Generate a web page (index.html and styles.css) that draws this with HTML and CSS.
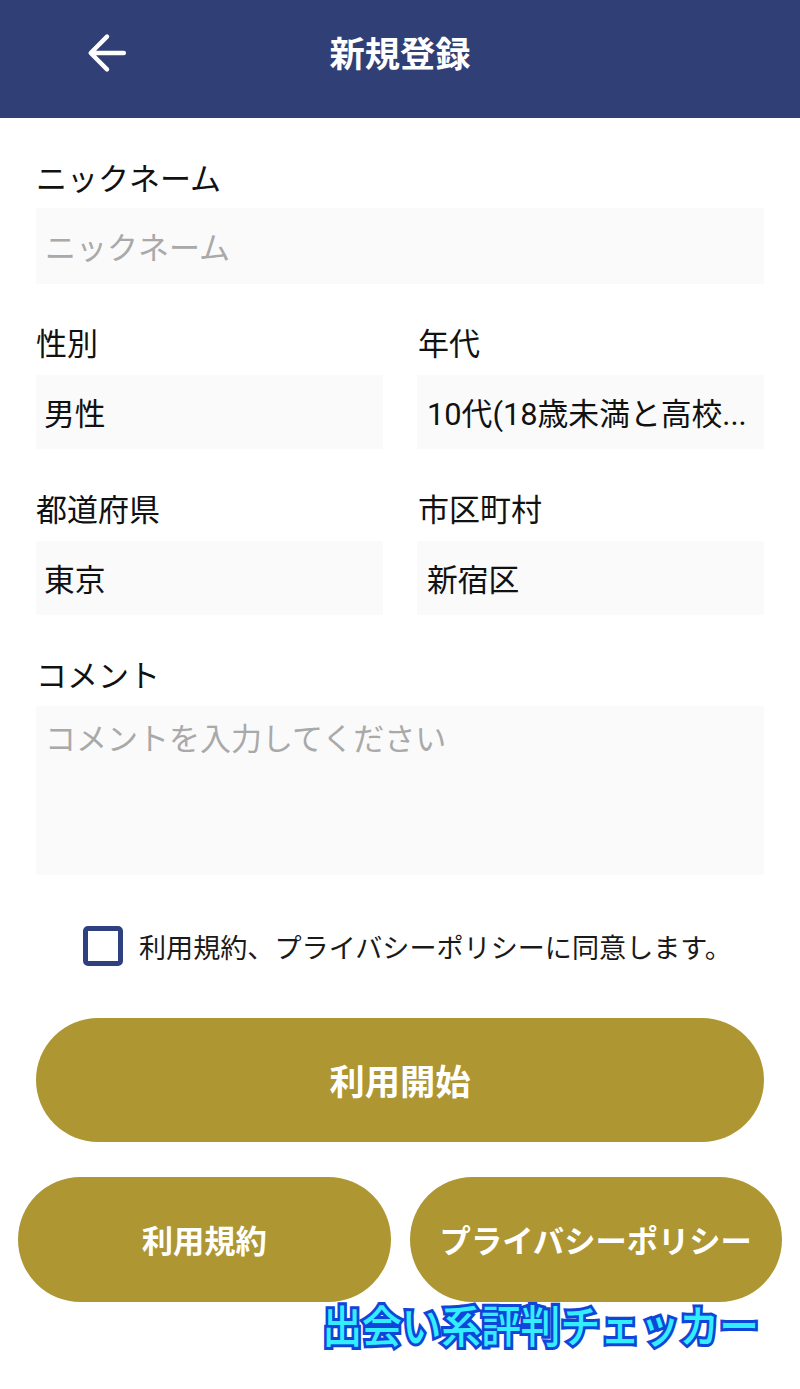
FILE: index.html
```html
<!DOCTYPE html>
<html lang="ja">
<head>
<meta charset="utf-8">
<title>新規登録</title>
<link rel="stylesheet" href="styles.css">
</head>
<body>
<header class="header">
  <svg class="back" viewBox="0 0 38 38" aria-hidden="true"><path d="M35 19H4M19 3.500 3.500 19 19 34.500" fill="none" stroke="#fff" stroke-width="4.200" stroke-linecap="round" stroke-linejoin="round"/></svg>
  <h1 class="title">新規登録</h1>
</header>
<main class="form">
  <section class="group">
    <div class="label">ニックネーム</div>
    <div class="field placeholder">ニックネーム</div>
  </section>
  <div class="row">
    <section class="group">
      <div class="label">性別</div>
      <div class="field select">男性</div>
    </section>
    <section class="group">
      <div class="label">年代</div>
      <div class="field select indent">10代(18歳未満と高校...</div>
    </section>
  </div>
  <div class="row">
    <section class="group">
      <div class="label">都道府県</div>
      <div class="field select">東京</div>
    </section>
    <section class="group">
      <div class="label">市区町村</div>
      <div class="field select indent">新宿区</div>
    </section>
  </div>
  <section class="group">
    <div class="label comment-label">コメント</div>
    <div class="field textarea placeholder">コメントを入力してください</div>
  </section>
  <div class="agree">
    <span class="checkbox"></span>
    <span class="agree-text">利用規約、プライバシーポリシーに同意します。</span>
  </div>
  <button class="btn primary">利用開始</button>
</main>
<nav class="links">
  <button class="btn link">利用規約</button>
  <button class="btn link">プライバシーポリシー</button>
</nav>
<div class="mark-row"><span class="mark">出会い系評判チェッカー</span></div>
</body>
</html>
```
FILE: styles.css
```css
* { box-sizing: border-box; }
html, body { margin: 0; padding: 0; background: #fff; }
body {
  width: 800px;
  height: 1389px;
  overflow: hidden;
  font-family: Roboto, "Noto Sans CJK JP", "Noto Sans", sans-serif;
  color: #111;
}
.header {
  position: relative;
  height: 118px;
  background: #303f75;
  display: flex;
  align-items: center;
  justify-content: center;
}
.back { position: absolute; left: 87px; top: 33px; width: 40px; height: 40px; }
.title { margin: 0 0 8px; font-size: 35.300px; line-height: 50px; font-weight: 700; color: #fff; }
.form { padding: 0 36px; }
.group { flex: 1 1 0; min-width: 0; padding-top: 36px; }
.label { font-size: 31px; line-height: 52px; height: 54px; white-space: nowrap; }
.row .label { line-height: 50px; height: 55px; }
.row + .row .label { line-height: 52px; height: 56px; }
.row .group + .group .label { padding-left: 1px; }
.comment-label { line-height: 52px; height: 55px; }
.field {
  height: 76px;
  background: #fafafa;
  font-size: 31px;
  line-height: 82px;
  padding-left: 9px;
  white-space: nowrap;
  overflow: hidden;
}
.select { height: 74px; line-height: 80px; font-size: 30.800px; padding-left: 8px; }
.select.indent { padding-left: 10px; }
.placeholder { color: #a9a9a9; }
.row { display: flex; gap: 34px; }
.textarea { height: 169px; line-height: 68px; }
.agree {
  display: flex;
  align-items: center;
  padding-left: 47px;
  margin-top: 51px;
  height: 40px;
}
.checkbox {
  width: 40px;
  height: 40px;
  border: 5px solid #2e4080;
  border-radius: 5px;
  margin-right: 16px;
  flex: none;
}
.agree-text { font-size: 27.100px; white-space: nowrap; color: #1a1a1a; }
.btn {
  display: block;
  border: 0;
  padding: 0;
  background: #ae9632;
  color: #fff;
  font-family: inherit;
  font-weight: 700;
  white-space: nowrap;
}
.primary {
  width: 100%;
  height: 124px;
  border-radius: 62px;
  margin-top: 52px;
  padding-bottom: 2px;
  font-size: 35.300px;
}
.links {
  display: flex;
  gap: 19px;
  padding: 0 18px;
  margin-top: 35px;
}
.link {
  flex: 1 1 0;
  height: 125px;
  border-radius: 62.500px;
  font-size: 31.300px;
}
.mark-row { display: flex; justify-content: flex-end; padding-right: 41px; }
.mark {
  display: inline-block;
  font-size: 39.700px;
  line-height: 52px;
  font-weight: 500;
  color: #33eeff;
  -webkit-text-stroke: 5.500px #0f45d8;
  paint-order: stroke fill;
  white-space: nowrap;
  transform: scaleY(1.12);
}
```
